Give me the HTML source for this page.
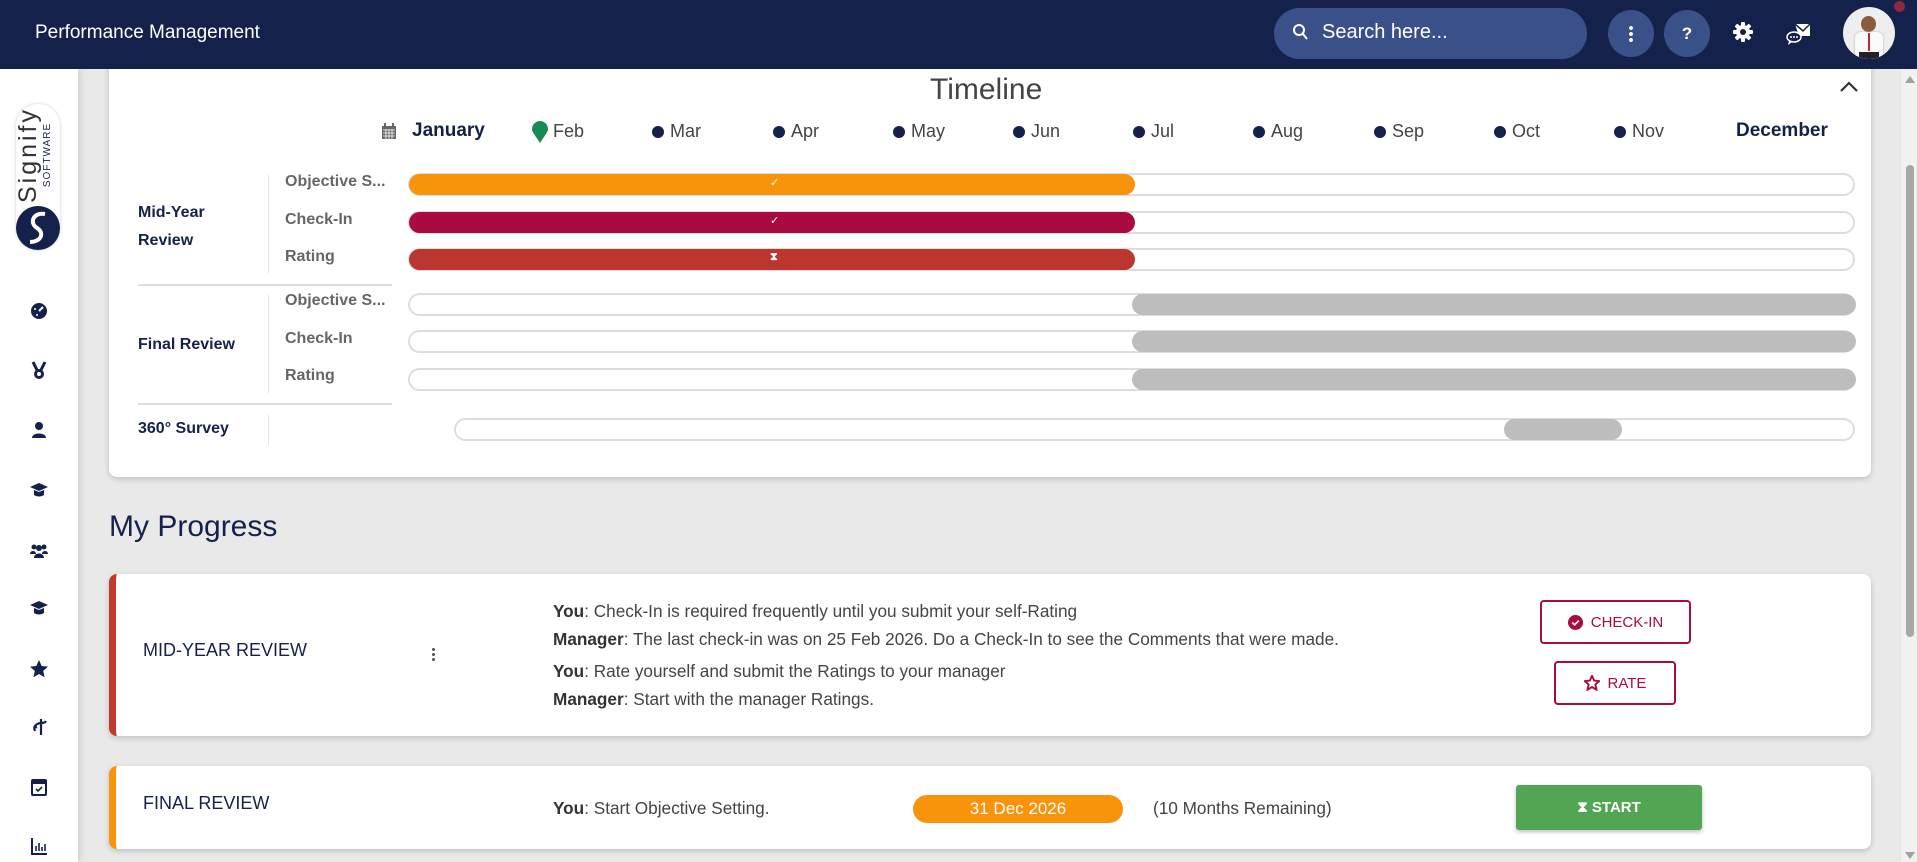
<!DOCTYPE html>
<html><head><meta charset="utf-8">
<style>
*{box-sizing:border-box;margin:0;padding:0}
body{width:1917px;height:862px;overflow:hidden;background:#e9e9e9;font-family:"Liberation Sans",Arial,sans-serif;position:relative}
.abs{position:absolute}
.hdr{left:0;top:0;width:1917px;height:69px;background:#14224b;z-index:5}
.top{z-index:6}
.side{left:0;top:69px;width:78px;height:793px;background:#fff;box-shadow:2px 0 6px rgba(0,0,0,.12)}
.card{background:#fff;border-radius:8px;box-shadow:0 2px 6px rgba(0,0,0,.18)}
.mon{top:121px;font-size:18px;color:#444;}
.dot{display:inline-block;width:12px;height:12px;border-radius:50%;background:#14224b;margin-right:6px;vertical-align:-1px}
.track{left:408px;width:1447px;height:23px;border:2px solid #ddd;border-radius:12px;background:#fff}
.fill{top:-1px;height:21px;border-radius:11px;left:-1px}
.gl{font-size:16px;font-weight:bold;color:#14224b}
.sl{font-size:16px;font-weight:bold;color:#666;left:285px}
.ic{left:29px;width:20px;height:20px}
.txt{font-size:17.2px;color:#444;left:553px}
.txt b{color:#333}
.btn{border:2px solid #a90a42;border-radius:4px;color:#a90a42;font-size:15px;display:flex;align-items:center;justify-content:center;gap:8px;background:#fff}
</style></head><body>
<div class="abs hdr"></div>
<div class="abs top" style="left:35px;top:22px;color:#fff;font-size:19px">Performance Management</div>
<div class="abs top" style="left:1274px;top:8px;width:313px;height:51px;border-radius:26px;background:#3a5088"></div>
<svg class="abs top" style="left:1292px;top:23px" width="18" height="20" viewBox="0 0 18 20"><circle cx="7" cy="7" r="5" fill="none" stroke="#fff" stroke-width="2"/><path d="M11 11l4 5" stroke="#fff" stroke-width="2"/></svg>
<div class="abs top" style="left:1322px;top:21px;color:#fff;font-size:20px">Search here...</div>
<div class="abs top" style="left:1608px;top:10px;width:46px;height:47px;border-radius:50%;background:#3a5088"></div>
<div class="abs top" style="left:1629px;top:25px;width:4px;height:17px;background:radial-gradient(circle,#fff 1.8px,transparent 2px) 0 0/4px 6px repeat-y"></div>
<div class="abs top" style="left:1664px;top:10px;width:46px;height:47px;border-radius:50%;background:#3a5088;color:#fff;font-size:17px;text-align:center;line-height:47px;font-weight:bold">?</div>
<svg class="abs top" style="left:1733px;top:22px" width="20" height="20" viewBox="0 0 20 20"><g fill="#fff"><circle cx="10" cy="10" r="7"/><rect x="8" y="0" width="4" height="20" rx="1"/><rect x="0" y="8" width="20" height="4" rx="1"/><rect x="8" y="0" width="4" height="20" rx="1" transform="rotate(45 10 10)"/><rect x="8" y="0" width="4" height="20" rx="1" transform="rotate(-45 10 10)"/></g><circle cx="10" cy="10" r="3" fill="#14224b"/></svg>
<svg class="abs top" style="left:1786px;top:22px" width="26" height="24" viewBox="0 0 26 24"><path d="M9 2h15v12H13z" fill="#fff"/><path d="M9 2l8 7 7-7" stroke="#14224b" stroke-width="1.5" fill="none"/><ellipse cx="8" cy="15" rx="7" ry="5" fill="#14224b" stroke="#fff" stroke-width="1.5"/><path d="M3 19l-1 4 4-3" fill="#fff"/><circle cx="5" cy="15" r="1" fill="#fff"/><circle cx="8" cy="15" r="1" fill="#fff"/><circle cx="11" cy="15" r="1" fill="#fff"/></svg>
<div class="abs top" style="left:1843px;top:7px;width:52px;height:52px;border-radius:50%;background:#eee;overflow:hidden"><div style="position:absolute;left:18px;top:9px;width:15px;height:16px;border-radius:50%;background:#8a5a3c"></div><div style="position:absolute;left:12px;top:25px;width:28px;height:30px;background:#fafafa;border-radius:6px;box-shadow:0 0 2px #aaa"></div><div style="position:absolute;left:25px;top:26px;width:2px;height:18px;background:#c0282d"></div><div style="position:absolute;left:16px;top:45px;width:20px;height:10px;background:#222"></div></div>
<div class="abs top" style="left:1894px;top:1px;width:11px;height:11px;border-radius:50%;background:#8b2a3a"></div>

<div class="abs side"></div>
<div class="abs" style="left:16px;top:104px;width:44px;height:146px;border-radius:22px;background:#fff;box-shadow:0 0 3px #ccc"></div>
<div class="abs" style="left:-35px;top:133px;width:146px;height:44px;transform:rotate(-90deg);text-align:center;line-height:1">
<div style="font-size:25px;color:#333;letter-spacing:3px">Signify</div><div style="font-size:10px;color:#14224b;letter-spacing:1px;margin-top:2px">SOFTWARE</div></div>
<svg class="abs" style="left:15px;top:205px" width="46" height="46" viewBox="0 0 46 46"><circle cx="23" cy="23" r="22" fill="#14224b"/><path d="M30 9C18 7 14 18 22 23S26 37 15 37" stroke="#fff" stroke-width="4" fill="none"/></svg>
<svg class="abs ic" style="top:301px" viewBox="0 0 20 20"><circle cx="10" cy="10" r="8" fill="#14224b"/><path d="M10 10l4-4" stroke="#fff" stroke-width="2"/><circle cx="6" cy="8" r="1" fill="#fff"/><circle cx="8" cy="14" r="1" fill="#fff"/></svg>
<svg class="abs ic" style="top:360px" viewBox="0 0 20 20"><path d="M4 2l4 8M16 2l-4 8" stroke="#14224b" stroke-width="3"/><circle cx="10" cy="14" r="5" fill="#14224b"/><circle cx="10" cy="14" r="2" fill="#fff"/></svg>
<svg class="abs ic" style="top:420px" viewBox="0 0 20 20"><circle cx="10" cy="6" r="4" fill="#14224b"/><path d="M3 18c0-6 14-6 14 0z" fill="#14224b"/></svg>
<svg class="abs ic" style="top:480px" viewBox="0 0 20 20"><path d="M1 7l9-4 9 4-9 4z" fill="#14224b"/><path d="M5 10v5c3 2 7 2 10 0v-5l-5 2z" fill="#14224b"/></svg>
<svg class="abs ic" style="top:540px" viewBox="0 0 20 20"><g fill="#14224b"><circle cx="5" cy="7" r="2.5"/><circle cx="15" cy="7" r="2.5"/><circle cx="10" cy="8" r="3"/><path d="M1 14c0-4 6-4 6 0zM13 14c0-4 6-4 6 0zM5 18c0-6 10-6 10 0z"/></g></svg>
<svg class="abs ic" style="top:598px" viewBox="0 0 20 20"><path d="M1 7l9-4 9 4-9 4z" fill="#14224b"/><path d="M5 10v5c3 2 7 2 10 0v-5l-5 2z" fill="#14224b"/></svg>
<svg class="abs ic" style="top:659px" viewBox="0 0 20 20"><path d="M10 1l2.7 6 6.3.6-4.8 4.3 1.4 6.4L10 15l-5.6 3.3 1.4-6.4L1 7.6 7.3 7z" fill="#14224b"/></svg>
<svg class="abs ic" style="top:717px" viewBox="0 0 20 20"><path d="M12 2v16M12 6c-3 0-6 2-7 5M5 11l3-1M5 11l1 3M12 6c2 0 4 0 5-2" stroke="#14224b" stroke-width="2.2" fill="none"/></svg>
<svg class="abs ic" style="top:777px" viewBox="0 0 20 20"><rect x="3" y="3" width="14" height="15" rx="1" fill="none" stroke="#14224b" stroke-width="2"/><rect x="3" y="3" width="14" height="4" fill="#14224b"/><path d="M7 12l2 2 4-4" stroke="#14224b" stroke-width="1.6" fill="none"/></svg>
<svg class="abs ic" style="top:836px" viewBox="0 0 20 20"><path d="M3 2v16h15" stroke="#14224b" stroke-width="2" fill="none"/><path d="M7 15v-5M10 15V7M13 15v-4M16 15V8" stroke="#14224b" stroke-width="1.6"/></svg>

<!-- timeline card -->
<div class="abs card" style="left:109px;top:50px;width:1762px;height:427px"></div>
<div class="abs" style="left:930px;top:73px;font-size:30px;color:#444">Timeline</div>
<svg class="abs" style="left:1839px;top:80px" width="20" height="14" viewBox="0 0 20 14"><path d="M2 11l8-8 8 8" stroke="#333" stroke-width="2.2" fill="none"/></svg>
<svg class="abs" style="left:381px;top:123px" width="16" height="17" viewBox="0 0 16 17"><rect x="1" y="3" width="14" height="13" fill="#666"/><rect x="3" y="0" width="2" height="4" fill="#666"/><rect x="11" y="0" width="2" height="4" fill="#666"/><path d="M2 7h12M2 10h12M2 13h12M5 6v10M8 6v10M11 6v10" stroke="#fff" stroke-width=".8"/></svg>
<div class="abs mon" style="left:412px;color:#14224b;font-weight:bold;font-size:19px;top:120px">January</div>
<svg class="abs" style="left:532px;top:121px" width="16" height="22" viewBox="0 0 16 22"><path d="M8 22C3 14 0 11 0 8a8 8 0 0116 0c0 3-3 6-8 14z" fill="#1a8a54"/></svg>
<div class="abs mon" style="left:553px">Feb</div>
<div class="abs mon" style="left:652px"><span class="dot"></span>Mar</div>
<div class="abs mon" style="left:773px"><span class="dot"></span>Apr</div>
<div class="abs mon" style="left:893px"><span class="dot"></span>May</div>
<div class="abs mon" style="left:1013px"><span class="dot"></span>Jun</div>
<div class="abs mon" style="left:1133px"><span class="dot"></span>Jul</div>
<div class="abs mon" style="left:1253px"><span class="dot"></span>Aug</div>
<div class="abs mon" style="left:1374px"><span class="dot"></span>Sep</div>
<div class="abs mon" style="left:1494px"><span class="dot"></span>Oct</div>
<div class="abs mon" style="left:1614px"><span class="dot"></span>Nov</div>
<div class="abs mon" style="left:1736px;color:#14224b;font-weight:bold;font-size:19px;top:120px">December</div>

<div class="abs gl" style="left:138px;top:199px;line-height:28px">Mid-Year<br>Review</div>
<div class="abs" style="left:268px;top:175px;width:1px;height:98px;background:#e5e5e5"></div>
<div class="abs sl" style="top:173px">Objective S...</div>
<div class="abs sl" style="top:211px">Check-In</div>
<div class="abs sl" style="top:248px">Rating</div>
<div class="abs track" style="top:173px"><div class="abs fill" style="width:726px;background:#f7940b"></div><div class="abs" style="left:360px;top:1px;color:#fff;font-size:11px">✓</div></div>
<div class="abs track" style="top:211px"><div class="abs fill" style="width:726px;background:#a90a42"></div><div class="abs" style="left:360px;top:1px;color:#fff;font-size:11px">✓</div></div>
<div class="abs track" style="top:248px"><div class="abs fill" style="width:726px;background:#bb362f"></div><div class="abs" style="left:360px;top:1px;color:#fff;font-size:11px;font-weight:bold">⧗</div></div>
<div class="abs" style="left:138px;top:284px;width:254px;height:2px;background:#ddd"></div>

<div class="abs gl" style="left:138px;top:336px">Final Review</div>
<div class="abs" style="left:268px;top:295px;width:1px;height:98px;background:#e5e5e5"></div>
<div class="abs sl" style="top:292px">Objective S...</div>
<div class="abs sl" style="top:330px">Check-In</div>
<div class="abs sl" style="top:367px">Rating</div>
<div class="abs track" style="top:293px"><div class="abs fill" style="left:722px;width:724px;background:#bdbdbd"></div></div>
<div class="abs track" style="top:330px"><div class="abs fill" style="left:722px;width:724px;background:#bdbdbd"></div></div>
<div class="abs track" style="top:368px"><div class="abs fill" style="left:722px;width:724px;background:#bdbdbd"></div></div>
<div class="abs" style="left:138px;top:403px;width:254px;height:2px;background:#ddd"></div>

<div class="abs gl" style="left:138px;top:420px">360° Survey</div>
<div class="abs" style="left:268px;top:415px;width:1px;height:30px;background:#e5e5e5"></div>
<div class="abs track" style="left:454px;width:1401px;top:418px"><div class="abs fill" style="left:1048px;width:118px;background:#bdbdbd"></div></div>

<div class="abs" style="left:109px;top:510px;font-size:30px;color:#14224b">My Progress</div>

<div class="abs card" style="left:109px;top:574px;width:1762px;height:162px;border-left:7px solid #c0392b"></div>
<div class="abs" style="left:143px;top:640px;font-size:18px;color:#14224b">MID-YEAR REVIEW</div>
<div class="abs" style="left:432px;top:647px;width:3px;height:14px;background:radial-gradient(circle,#555 1.4px,transparent 1.6px) 0 0/3px 5px repeat-y"></div>
<div class="abs txt" style="top:597px;line-height:28px">
<div><b>You</b>: Check-In is required frequently until you submit your self-Rating</div>
<div><b>Manager</b>: The last check-in was on 25 Feb 2026. Do a Check-In to see the Comments that were made.</div>
<div style="margin-top:4px"><b>You</b>: Rate yourself and submit the Ratings to your manager</div>
<div><b>Manager</b>: Start with the manager Ratings.</div></div>
<div class="abs btn" style="left:1540px;top:600px;width:151px;height:44px"><svg width="15" height="15" viewBox="0 0 16 16"><circle cx="8" cy="8" r="8" fill="#a90a42"/><path d="M4.5 8l2.5 2.5 4.5-4.5" stroke="#fff" stroke-width="1.8" fill="none"/></svg>CHECK-IN</div>
<div class="abs btn" style="left:1554px;top:661px;width:122px;height:44px"><svg width="16" height="16" viewBox="0 0 20 20"><path d="M10 1l2.7 6 6.3.6-4.8 4.3 1.4 6.4L10 15l-5.6 3.3 1.4-6.4L1 7.6 7.3 7z" fill="none" stroke="#a90a42" stroke-width="2.4"/></svg>RATE</div>

<div class="abs card" style="left:109px;top:766px;width:1762px;height:83px;border-left:7px solid #f7940b"></div>
<div class="abs" style="left:143px;top:793px;font-size:18px;color:#14224b">FINAL REVIEW</div>
<div class="abs txt" style="top:798px"><b>You</b>: Start Objective Setting.</div>
<div class="abs" style="left:913px;top:795px;width:210px;height:28px;border-radius:14px;background:#f7940b;color:#fff;font-size:17px;text-align:center;line-height:28px">31 Dec 2026</div>
<div class="abs" style="left:1153px;top:798px;font-size:17.2px;color:#444">(10 Months Remaining)</div>
<div class="abs" style="left:1516px;top:785px;width:186px;height:45px;background:#52a552;border-radius:3px;box-shadow:0 2px 4px rgba(0,0,0,.25);color:#fff;font-size:15px;font-weight:bold;display:flex;align-items:center;justify-content:center;gap:8px">⧗ START</div>

<div class="abs" style="left:1901px;top:69px;width:16px;height:793px;background:#f1f1f1"></div>
<div class="abs" style="left:1906px;top:165px;width:8px;height:472px;border-radius:4px;background:#a8a8a8"></div>
<div class="abs" style="left:1905px;top:76px;width:0;height:0;border-left:5px solid transparent;border-right:5px solid transparent;border-bottom:7px solid #a0a0a0"></div>
<div class="abs" style="left:1905px;top:852px;width:0;height:0;border-left:5px solid transparent;border-right:5px solid transparent;border-top:7px solid #a0a0a0"></div>
</body></html>
